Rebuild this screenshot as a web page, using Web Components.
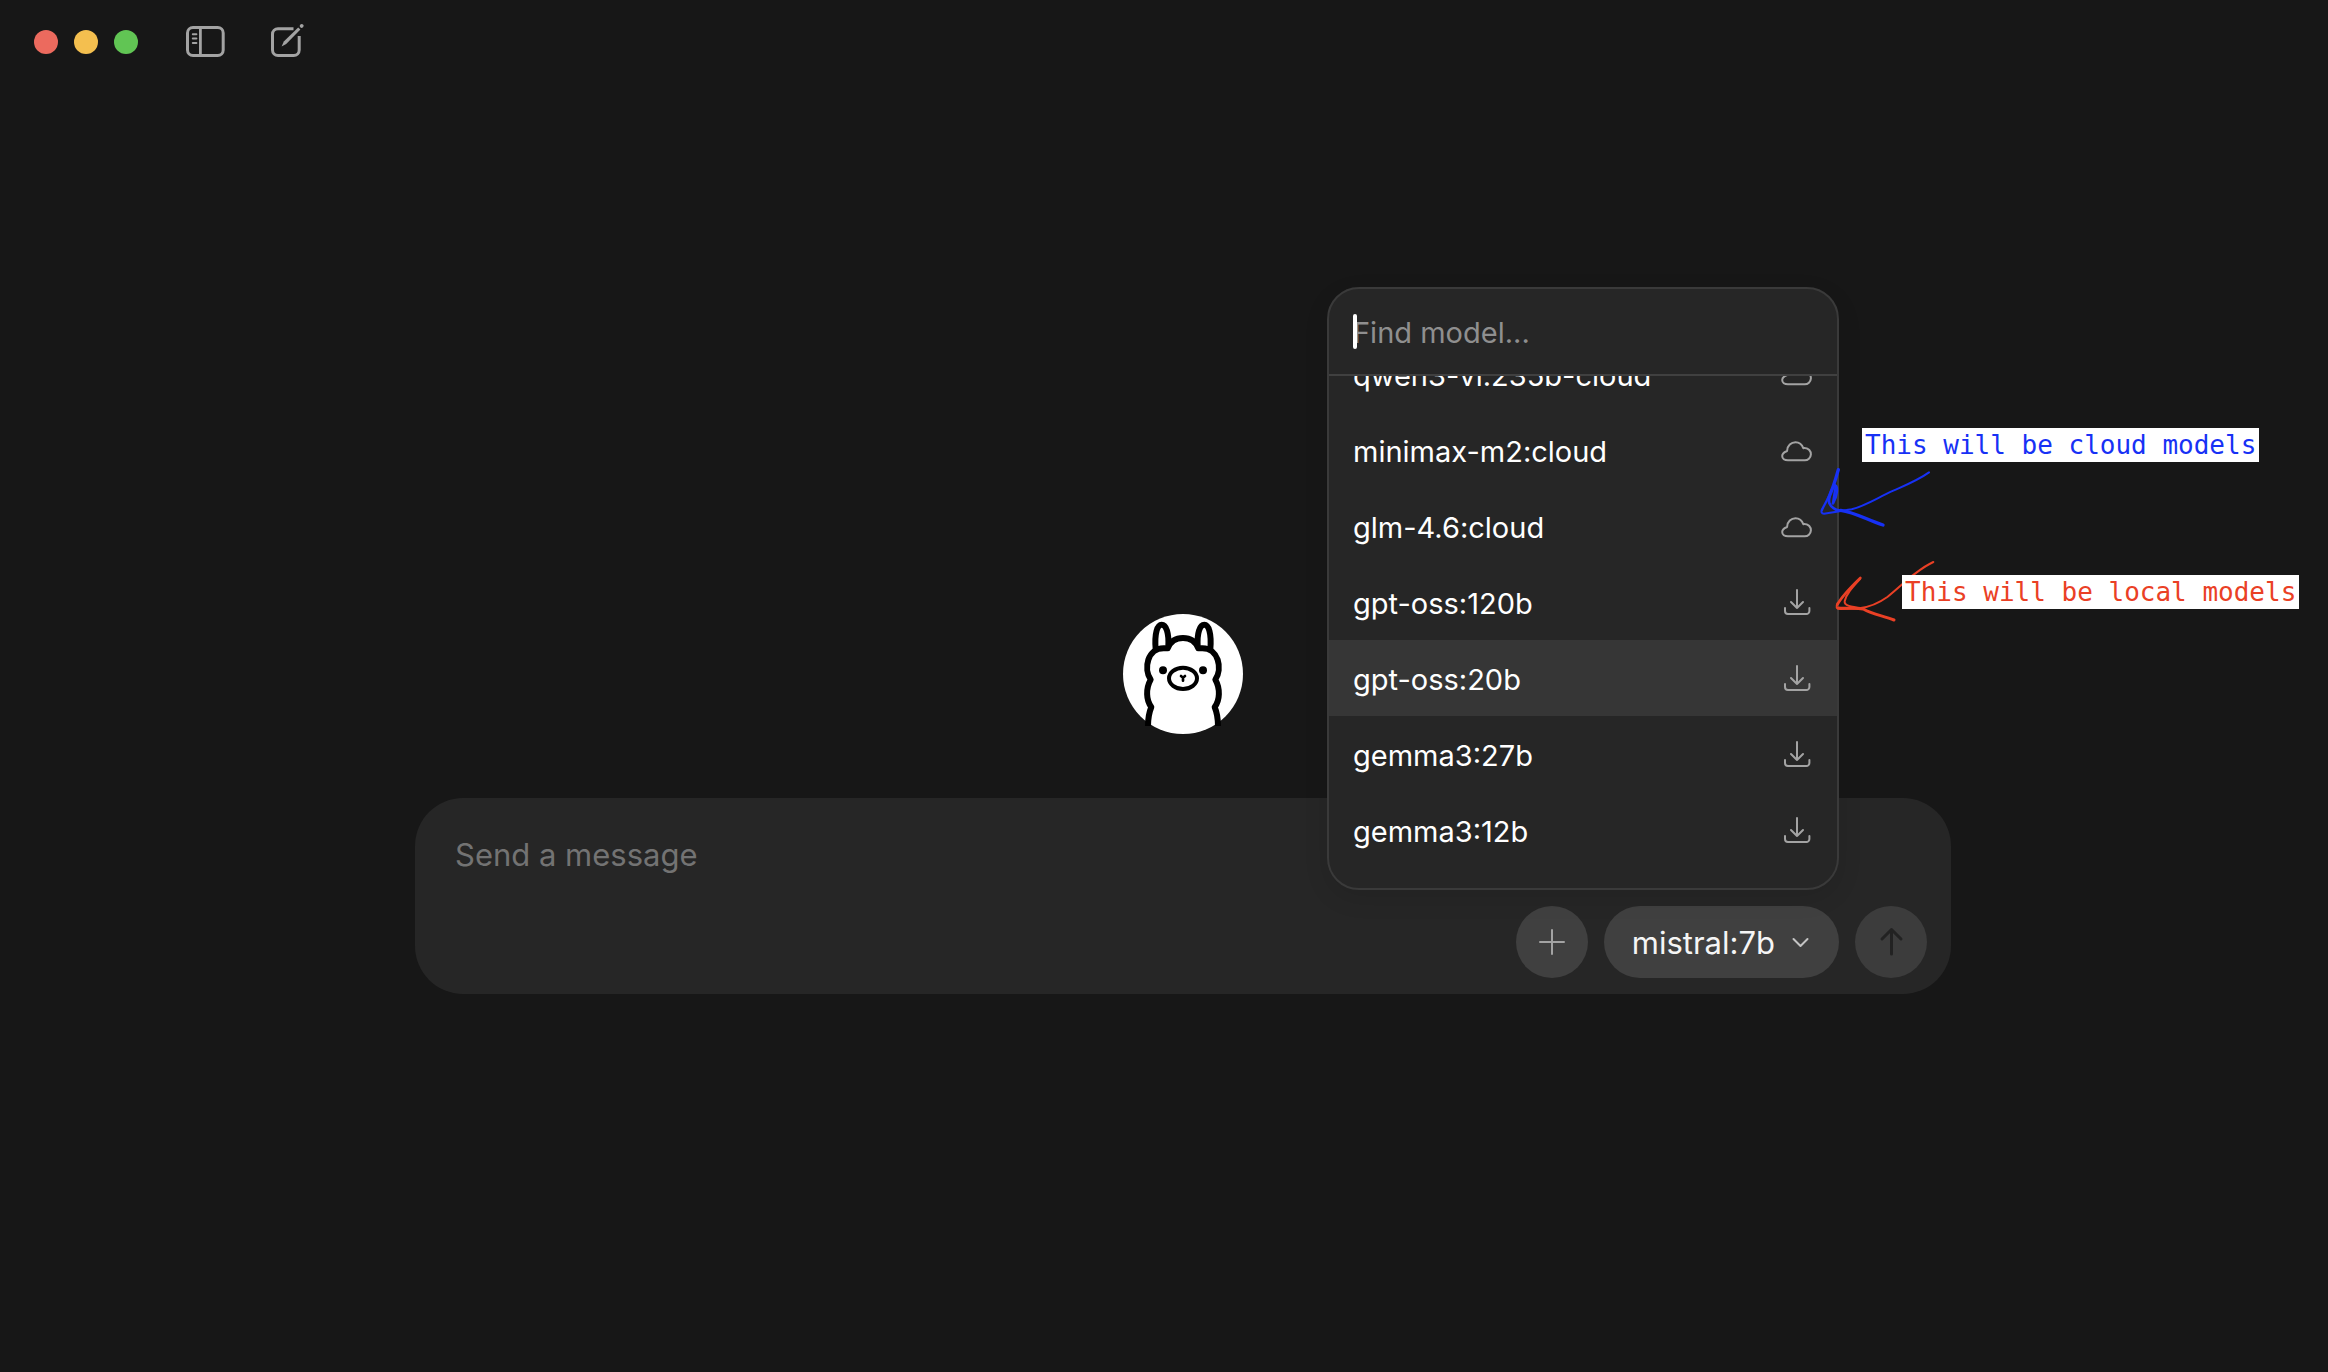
<!DOCTYPE html>
<html lang="en">
<head>
<meta charset="utf-8">
<title>Ollama</title>
<style>
  html, body { height: 100%; margin: 0; }
  body {
    background: #171717;
    color: #fff;
    font-family: Inter, "Liberation Sans", sans-serif;
    font-size: 29px;
  }
</style>
</head>
<body>
<chat-window>
  <title-bar slot="header"></title-bar>
  <llama-logo></llama-logo>
  <message-composer>
    <model-picker value="mistral:7b">
      <model-menu>
        <model-option kind="cloud">qwen3-vl:235b-cloud</model-option>
        <model-option kind="cloud">minimax-m2:cloud</model-option>
        <model-option kind="cloud">glm-4.6:cloud</model-option>
        <model-option kind="local">gpt-oss:120b</model-option>
        <model-option kind="local" active>gpt-oss:20b</model-option>
        <model-option kind="local">gemma3:27b</model-option>
        <model-option kind="local">gemma3:12b</model-option>
      </model-menu>
      <menu-notes>
        <span slot="cloud">This will be cloud models</span>
        <span slot="local">This will be local models</span>
      </menu-notes>
    </model-picker>
  </message-composer>
</chat-window>

<script>
class ChatWindow extends HTMLElement {
  connectedCallback() {
    this.attachShadow({ mode: 'open' });
    this.shadowRoot.innerHTML = `
      <style>
        :host { display: flex; flex-direction: column; height: 100%; overflow: hidden; }
        main {
          flex: 1;
          display: flex;
          flex-direction: column;
          align-items: center;
          justify-content: center;
          gap: 64px;
          padding: 152px 0 0 38px;
        }
      </style>
      <slot name="header"></slot>
      <main><slot></slot></main>
    `;
  }
}

class TitleBar extends HTMLElement {
  connectedCallback() {
    this.attachShadow({ mode: 'open' });
    this.shadowRoot.innerHTML = `
      <style>
        :host { display: block; }
        header { display: flex; align-items: center; height: 84px; padding-left: 34px; }
        .lights { display: flex; gap: 16px; margin-right: 44px; }
        .lights i { width: 24px; height: 24px; border-radius: 50%; }
        .red { background: #ec6a5e; }
        .yellow { background: #f4bf4f; }
        .green { background: #61c554; }
        nav { display: flex; gap: 36px; }
        button { display: flex; padding: 0; border: 0; background: none; color: #a3a3a3; }
        svg { width: 48px; height: 48px; fill: none; stroke: currentColor; stroke-width: 3; stroke-linecap: round; }
      </style>
      <header>
        <div class="lights"><i class="red"></i><i class="yellow"></i><i class="green"></i></div>
        <nav>
          <button aria-label="Toggle sidebar">
            <svg viewBox="0 0 48 48">
              <rect x="5.5" y="9.5" width="35.7" height="28" rx="5.5"/>
              <path d="M18.400 9.500v28" stroke-width="2.800"/>
              <path d="M10.800 16.200h3.600M10.800 20.500h3.600M10.800 25h3.600" stroke-width="2"/>
            </svg>
          </button>
          <button aria-label="New chat">
            <svg viewBox="0 0 48 48">
              <path d="M27.500 10.700H12a5.500 5.500 0 0 0-5.500 5.500V32a5.500 5.500 0 0 0 5.500 5.500h15.700a5.500 5.500 0 0 0 5.500-5.500V18" stroke-linecap="butt"/>
              <path d="M15.600 28.400l2.200-4.800L32.200 9.400l2.200 2.200L20.200 26z" fill="currentColor" stroke="none"/>
              <path d="M35.600 8l.1-.1" stroke-width="3.800"/>
            </svg>
          </button>
        </nav>
      </header>
    `;
  }
}

class LlamaLogo extends HTMLElement {
  connectedCallback() {
    this.attachShadow({ mode: 'open' });
    this.shadowRoot.innerHTML = `
      <style>
        :host { display: block; }
        svg { display: block; width: 120px; height: 120px; }
      </style>
      <svg viewBox="72 72 360 360" role="img" aria-label="Ollama">
        <circle cx="252" cy="252" r="180" fill="#fff"/>
        <g fill="none" stroke="#000" stroke-width="18" stroke-linejoin="round">
          <path d="M147 408C147 385 150 368 157 351C141 330 140 296 155 269C133 236 145 174 195 175L206 175C215 152 232 144 252 144"/>
          <path d="M357 408C357 385 354 368 347 351C363 330 364 296 349 269C371 236 359 174 309 175L298 175C289 152 272 144 252 144"/>
          <path d="M170 177C166 130 175 104 188 104C202 104 210 130 208 168"/>
          <path d="M334 177C338 130 329 104 316 104C302 104 294 130 296 168"/>
          <ellipse cx="252" cy="265" rx="42" ry="32" stroke-width="12"/>
          <path d="M246 258L252 263L258 258M252 263V272" stroke-width="8" stroke-linecap="round"/>
        </g>
        <circle cx="192" cy="241" r="12"/>
        <circle cx="312" cy="241" r="12"/>
      </svg>
    `;
  }
}

class MessageComposer extends HTMLElement {
  connectedCallback() {
    this.attachShadow({ mode: 'open' });
    this.shadowRoot.innerHTML = `
      <style>
        :host { display: block; width: 100%; max-width: 1536px; }
        form {
          box-sizing: border-box;
          padding: 32px 24px 16px;
          border-radius: 48px;
          background: #262626;
        }
        textarea {
          display: block;
          box-sizing: border-box;
          width: 100%;
          height: 50px;
          margin-bottom: 26px;
          padding: 0 16px;
          border: 0;
          outline: 0;
          resize: none;
          overflow: hidden;
          background: none;
          color: #fff;
          font: inherit;
          font-size: 31px;
          line-height: 50px;
        }
        textarea::placeholder { color: #737373; opacity: 1; }
        .actions { display: flex; justify-content: flex-end; gap: 16px; }
        button {
          display: grid;
          place-items: center;
          width: 72px;
          height: 72px;
          padding: 0;
          border: 0;
          border-radius: 50%;
          background: #404040;
          color: #a3a3a3;
        }
        .send { background: #3c3c3c; color: #222; }
        svg { width: 32px; height: 32px; fill: none; stroke: currentColor; stroke-width: 2; stroke-linecap: round; stroke-linejoin: round; }
        .send svg { stroke-width: 3; }
      </style>
      <form onsubmit="return false">
        <textarea aria-label="Message" placeholder="Send a message" rows="1"></textarea>
        <div class="actions">
          <button type="button" aria-label="Add attachment">
            <svg viewBox="0 0 32 32"><path d="M16 4v24M4 16h24"/></svg>
          </button>
          <slot></slot>
          <button class="send" aria-label="Send" disabled>
            <svg viewBox="0 0 32 32"><path d="M16.500 28V3.500M7 13l9.500-9.500L26 13"/></svg>
          </button>
        </div>
      </form>
    `;
  }
}

class ModelPicker extends HTMLElement {
  connectedCallback() {
    this.attachShadow({ mode: 'open' });
    this.shadowRoot.innerHTML = `
      <style>
        :host { display: block; position: relative; }
        button {
          display: flex;
          align-items: center;
          gap: 16px;
          height: 72px;
          padding: 0 28px;
          border: 0;
          border-radius: 36px;
          background: #404040;
          color: #f5f5f5;
          font: inherit;
          font-size: 31px;
        }
        svg { width: 20px; height: 20px; fill: none; stroke: #c4c4c4; stroke-width: 2; stroke-linecap: round; stroke-linejoin: round; }
      </style>
      <button type="button" aria-haspopup="listbox" aria-expanded="true">
        <span>${this.getAttribute('value')}</span>
        <svg viewBox="0 0 20 20"><path d="M2.500 7L9.500 14l7-7"/></svg>
      </button>
      <slot></slot>
    `;
  }
}

class ModelMenu extends HTMLElement {
  connectedCallback() {
    this.attachShadow({ mode: 'open' });
    this.shadowRoot.innerHTML = `
      <style>
        :host {
          position: absolute;
          right: 0;
          bottom: calc(100% + 16px);
          box-sizing: border-box;
          width: 512px;
          border: 2px solid #3a3a3a;
          border-radius: 32px;
          overflow: hidden;
          background: #262626;
          box-shadow: 0 8px 24px rgba(0, 0, 0, 0.1);
        }
        .search { position: relative; border-bottom: 2px solid #404040; }
        input {
          display: block;
          box-sizing: border-box;
          width: 100%;
          height: 85px;
          padding: 2px 24px 0;
          border: 0;
          outline: 0;
          background: none;
          color: #fff;
          font: inherit;
        }
        input::placeholder { color: #8f8f8f; opacity: 1; }
        .caret {
          position: absolute;
          left: 24px;
          top: 25px;
          width: 4px;
          height: 35px;
          border-radius: 2px;
          background: #fff;
        }
        .list { height: 512px; overflow-y: auto; scrollbar-width: none; }
        .rows { padding-bottom: 20px; }
      </style>
      <div class="search">
        <input type="text" aria-label="Find model" placeholder="Find model...">
        <span class="caret"></span>
      </div>
      <div class="list" role="listbox" aria-label="Models">
        <div class="rows"><slot></slot></div>
      </div>
    `;
  }

  scrollToEnd() {
    const list = this.shadowRoot.querySelector('.list');
    list.scrollTop = list.scrollHeight;
  }
}

const OPTION_ICONS = {
  cloud: '<path d="M7 26.300H23.500A6.150 6.150 0 0 0 24 14C23.300 13.900 22.800 14 22.300 14.200C21 10.500 18 8.200 14.500 8.200C10 8.200 6.500 11.700 6.200 16.300C6.200 16.800 6 17.100 5.600 17.300C2.500 18.500 1.200 20.300 1.200 22C1.200 24.500 3.500 26.300 7 26.300Z"/>',
  local: '<path d="M16 4v18M10 16l6 6 6-6M4 22v3a3 3 0 0 0 3 3h18.400a3 3 0 0 0 3-3v-3"/>'
};

class ModelOption extends HTMLElement {
  connectedCallback() {
    this.attachShadow({ mode: 'open' });
    this.shadowRoot.innerHTML = `
      <style>
        :host { display: block; }
        :host([active]) { background: #363636; }
        button {
          display: flex;
          align-items: center;
          justify-content: space-between;
          width: 100%;
          height: 76px;
          padding: 0 24px;
          border: 0;
          background: none;
          color: inherit;
          font: inherit;
          text-align: left;
        }
        span { padding-top: 2px; }
        svg { width: 32px; height: 32px; fill: none; stroke: #a3a3a3; stroke-width: 2; stroke-linecap: round; stroke-linejoin: round; }
      </style>
      <button type="button" role="option" aria-selected="${this.hasAttribute('active')}">
        <span><slot></slot></span>
        <svg viewBox="0 0 32 32" aria-hidden="true">${OPTION_ICONS[this.getAttribute('kind')]}</svg>
      </button>
    `;
  }
}

// hand-drawn notes pointing at the two kinds of model
class MenuNotes extends HTMLElement {
  connectedCallback() {
    this.attachShadow({ mode: 'open' });
    this.shadowRoot.innerHTML = `
      <style>
        :host {
          position: absolute;
          left: calc(100% - 29px);
          bottom: 348px;
          width: 140px;
          height: 170px;
          font: 26px/34px "DejaVu Sans Mono", monospace;
          pointer-events: none;
        }
        svg { display: block; width: 100%; height: 100%; fill: none; stroke-linecap: round; stroke-linejoin: round; }
        .note { position: absolute; padding: 0 3px; background: #fff; white-space: nowrap; }
        .cloud { left: 52px; top: -32px; color: #1731f5; }
        .local { left: 92px; top: 115px; color: #ea4025; }
      </style>
      <svg viewBox="0 0 420 510">
        <g stroke="#1731f5">
          <path stroke-width="6" d="M357 37C325 60 290 74 250 92C205 112 165 138 125 148C95 153 70 157 42 161C34 161 33 155 36 148"/>
          <path stroke-width="7" d="M36 150C40 139 49 126 56 111"/>
          <path stroke-width="10" d="M85 29C77 58 66 92 55 116"/>
          <path stroke-width="8" d="M69 130C82 108 84 80 76 76C64 84 54 112 58 130C63 142 72 149 90 152"/>
          <path stroke-width="7" d="M77 78L69 128"/>
          <path stroke-width="10" d="M92 151C135 157 172 180 219 195"/>
        </g>
        <g stroke="#ea4025">
          <path stroke-width="6" d="M370 306C343 318 321 337 303 350C278 371 255 393 232 411C207 429 178 441 148 445L92 447C78 447 77 440 83 429"/>
          <path stroke-width="8" d="M82 434C95 410 124 380 151 354"/>
          <path stroke-width="6" d="M150 357C126 383 109 402 104 424C102 437 122 440 158 445"/>
          <path stroke-width="9" d="M84 444C110 446 136 442 160 447C188 464 220 467 252 480"/>
        </g>
      </svg>
      <div class="note cloud"><slot name="cloud"></slot></div>
      <div class="note local"><slot name="local"></slot></div>
    `;
  }
}

customElements.define('chat-window', ChatWindow);
customElements.define('title-bar', TitleBar);
customElements.define('llama-logo', LlamaLogo);
customElements.define('message-composer', MessageComposer);
customElements.define('model-picker', ModelPicker);
customElements.define('model-menu', ModelMenu);
customElements.define('model-option', ModelOption);
customElements.define('menu-notes', MenuNotes);

document.querySelector('model-menu').scrollToEnd();
</script>
</body>
</html>
